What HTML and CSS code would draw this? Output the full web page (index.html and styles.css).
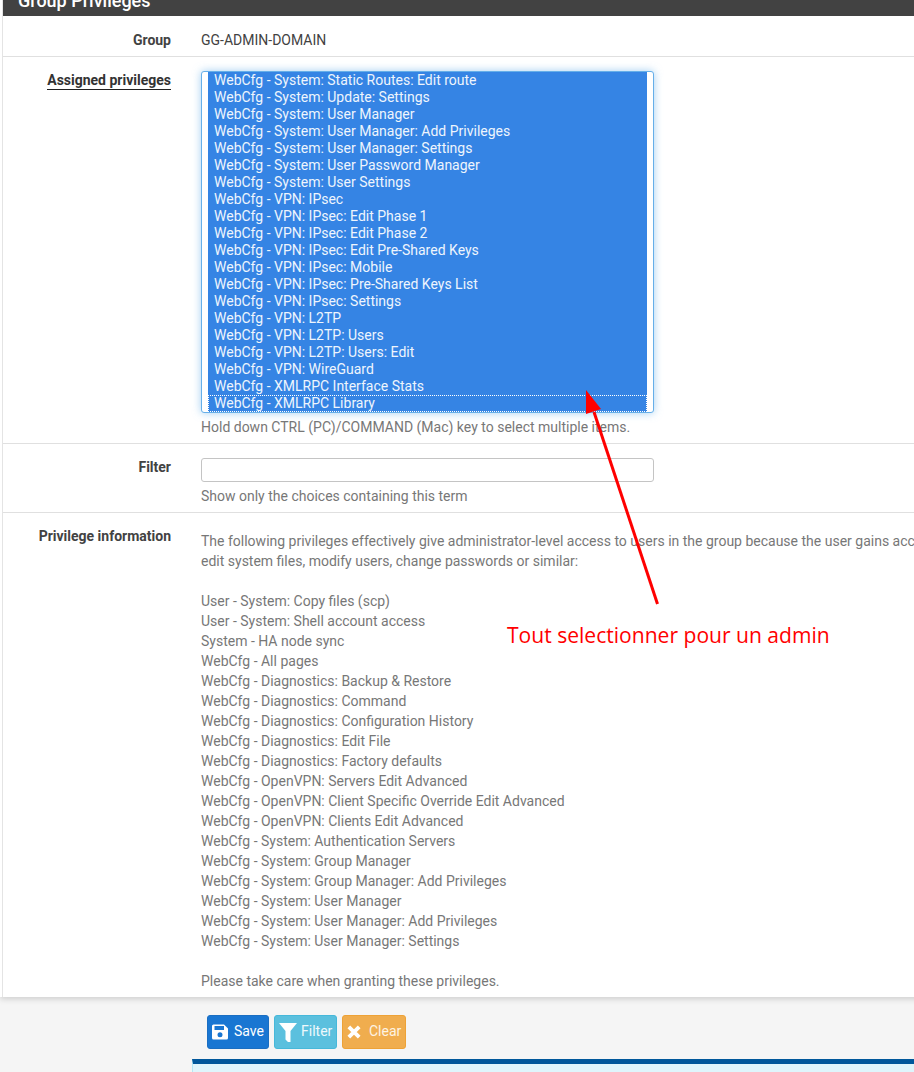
FILE: index.html
```html
<!DOCTYPE html>
<html lang="en">
<head>
<meta charset="utf-8">
<title>Group Privileges</title>
<link rel="stylesheet" href="styles.css">
</head>
<body>
<div class="page">
  <div class="panel">
  <section class="panel-inner">
    <h2 class="panel-title">Group Privileges</h2>
    <div class="row row-group">
      <div class="label">Group</div>
      <div class="content value">GG-ADMIN-DOMAIN</div>
    </div>
    <div class="row row-assigned">
      <div class="label"><span class="underlined">Assigned privileges</span></div>
      <div class="content">
        <div class="listbox">
          <div class="option">WebCfg - System: Static Routes: Edit route</div>
          <div class="option">WebCfg - System: Update: Settings</div>
          <div class="option">WebCfg - System: User Manager</div>
          <div class="option">WebCfg - System: User Manager: Add Privileges</div>
          <div class="option">WebCfg - System: User Manager: Settings</div>
          <div class="option">WebCfg - System: User Password Manager</div>
          <div class="option">WebCfg - System: User Settings</div>
          <div class="option">WebCfg - VPN: IPsec</div>
          <div class="option">WebCfg - VPN: IPsec: Edit Phase 1</div>
          <div class="option">WebCfg - VPN: IPsec: Edit Phase 2</div>
          <div class="option">WebCfg - VPN: IPsec: Edit Pre-Shared Keys</div>
          <div class="option">WebCfg - VPN: IPsec: Mobile</div>
          <div class="option">WebCfg - VPN: IPsec: Pre-Shared Keys List</div>
          <div class="option">WebCfg - VPN: IPsec: Settings</div>
          <div class="option">WebCfg - VPN: L2TP</div>
          <div class="option">WebCfg - VPN: L2TP: Users</div>
          <div class="option">WebCfg - VPN: L2TP: Users: Edit</div>
          <div class="option">WebCfg - VPN: WireGuard</div>
          <div class="option">WebCfg - XMLRPC Interface Stats</div>
          <div class="option option-active">WebCfg - XMLRPC Library</div>
        </div>
        <p class="help">Hold down CTRL (PC)/COMMAND (Mac) key to select multiple items.</p>
      </div>
    </div>
    <div class="row row-filter">
      <div class="label">Filter</div>
      <div class="content">
        <div class="textbox"></div>
        <p class="help">Show only the choices containing this term</p>
      </div>
    </div>
    <div class="row row-info">
      <div class="label label-info">Privilege information</div>
      <div class="content info">
        <p>The following privileges effectively give administrator-level access to users in the group because the user gains access to execute general commands,<br>edit system files, modify users, change passwords or similar:</p>
        <ul class="plain">
          <li>User - System: Copy files (scp)</li>
          <li>User - System: Shell account access</li>
          <li>System - HA node sync</li>
          <li>WebCfg - All pages</li>
          <li>WebCfg - Diagnostics: Backup &amp; Restore</li>
          <li>WebCfg - Diagnostics: Command</li>
          <li>WebCfg - Diagnostics: Configuration History</li>
          <li>WebCfg - Diagnostics: Edit File</li>
          <li>WebCfg - Diagnostics: Factory defaults</li>
          <li>WebCfg - OpenVPN: Servers Edit Advanced</li>
          <li>WebCfg - OpenVPN: Client Specific Override Edit Advanced</li>
          <li>WebCfg - OpenVPN: Clients Edit Advanced</li>
          <li>WebCfg - System: Authentication Servers</li>
          <li>WebCfg - System: Group Manager</li>
          <li>WebCfg - System: Group Manager: Add Privileges</li>
          <li>WebCfg - System: User Manager</li>
          <li>WebCfg - System: User Manager: Add Privileges</li>
          <li>WebCfg - System: User Manager: Settings</li>
        </ul>
        <p>Please take care when granting these privileges.</p>
      </div>
    </div>
  </section>
  </div>

  <div class="actions">
    <button class="btn btn-save" type="button">
      <svg class="icon icon-save" viewBox="0 0 16 16"><path fill="#fff" fill-rule="evenodd" d="M1.500 .5H12L16 4.500V14A1.500 1.500 0 0 1 14.500 15.500H1.500A1.500 1.500 0 0 1 0 14V2A1.500 1.500 0 0 1 1.500 .5zM2.500 2V6H12V2zM8 8.200a2.500 2.500 0 1 0 0 5a2.500 2.500 0 0 0 0-5z"/></svg>
      <span>Save</span>
    </button>
    <button class="btn btn-filter" type="button">
      <svg class="icon icon-filter" viewBox="0 0 18 19"><path fill="#fff" d="M0 0H18L11.500 8V19H9L6.500 16.500V8z"/></svg>
      <span>Filter</span>
    </button>
    <button class="btn btn-clear" type="button">
      <svg class="icon icon-clear" viewBox="0 0 14 14"><path fill="none" stroke="#fff" stroke-width="3.800" d="M1.800 1.800L12.200 12.200M12.200 1.800L1.800 12.200"/></svg>
      <span>Clear</span>
    </button>
  </div>
  <div class="infobox"></div>
</div>

<svg class="arrow" viewBox="0 0 914 1072" aria-hidden="true">
  <line x1="657.500" y1="604" x2="594" y2="412" stroke="#ff0000" stroke-width="3"/>
  <polygon fill="#ff0000" points="586,390 586,414 601,409"/>
</svg>
<div class="annotation">Tout selectionner pour un admin</div>
</body>
</html>
```
FILE: styles.css
```css
* { box-sizing: border-box; }

html, body {
  margin: 0;
  height: 1072px;
  overflow: hidden;
}

body {
  position: relative;
  background: #f5f5f5;
  font-family: Roboto, "Liberation Sans", sans-serif;
  font-size: 14px;
  color: #424242;
}

.page {
  width: 1200px;
}

.panel {
  padding-left: 2px;
  background: #fff;
  box-shadow: 0 2px 6px rgba(0, 0, 0, 0.16);
}

.panel-inner {
  border-left: 1px solid #e4e4e4;
}

.panel-title {
  margin: 0;
  height: 16px;
  padding: 0 0 5px 15px;
  background: #424242;
  color: #fff;
  font-size: 18px;
  font-weight: 500;
  line-height: 20px;
  overflow: hidden;
  display: flex;
  align-items: flex-end;
}

.row {
  display: grid;
  grid-template-columns: 168px 1fr;
  column-gap: 30px;
  border-bottom: 1px solid #e0e0e0;
}

.row-group { height: 41px; padding-top: 14px; }
.row-assigned { height: 387px; padding-top: 14px; }
.row-filter { height: 69px; padding-top: 14px; }
.row-info { height: 484px; padding-top: 13px; border-bottom: 0; }

.label {
  text-align: right;
  font-weight: 700;
  line-height: 20px;
  color: #424242;
  margin-top: -1px;
}

.row-group .label,
.label-info { margin-top: 0; }

.underlined {
  color: #333;
  border-bottom: 1px solid #212121;
  padding-bottom: 1px;
}

.value { line-height: 20px; }

.listbox {
  width: 453px;
  height: 342px;
  padding: 0 6px;
  background: #fff;
  border: 1px solid #66afe9;
  border-radius: 3px;
  box-shadow: 0 0 8px rgba(102, 175, 233, 0.6);
  overflow: hidden;
}

.option {
  height: 17px;
  padding-left: 6px;
  background: #3584e4;
  color: #eef5fd;
  line-height: 17px;
  white-space: nowrap;
}

.option-active {
  outline: 1px dotted #fff;
  outline-offset: -1px;
}

.help {
  margin: 4px 0 0;
  color: #777;
  line-height: 20px;
}

.textbox {
  width: 453px;
  height: 24px;
  background: #fff;
  border: 1px solid #c4c4c4;
  border-radius: 3px;
}

.info {
  padding-top: 5px;
  color: #777;
  line-height: 20px;
  white-space: nowrap;
}

.info p { margin: 0; }

.plain {
  list-style: none;
  margin: 20px 0;
  padding: 0;
}

.actions {
  display: flex;
  gap: 5px;
  margin: 18px 0 0 207px;
}

.btn {
  display: flex;
  align-items: center;
  height: 34px;
  padding: 0 0 2px 4px;
  border: 1px solid;
  border-radius: 3px;
  color: #fff;
  font: 14px/20px Roboto, "Liberation Sans", sans-serif;
}

.btn-save { width: 62px; background: #1976d2; border-color: #1a6ec2; }
.btn-filter { width: 63px; background: #5bc0de; border-color: #46b8da; color: #eef9fc; }
.btn-clear { width: 64px; background: #f0ad4e; border-color: #eea236; color: #fdf3e3; }

.icon { flex: none; display: block; }
.icon-save { width: 16px; height: 16px; margin: 1px 6px 0 0; }
.icon-filter { width: 18px; height: 19px; margin: 2px 4px 0 0; }
.icon-clear { width: 14px; height: 14px; margin: 2px 8px 0 0; }

.infobox {
  height: 60px;
  margin: 10px 0 0 192px;
  background: #dff5fc;
  border-top: 5px solid #00579b;
  border-left: 1px solid #b5e8f5;
}

.arrow {
  position: absolute;
  left: 0;
  top: 0;
  width: 914px;
  height: 1072px;
  pointer-events: none;
}

.annotation {
  position: absolute;
  left: 507px;
  top: 620px;
  color: #f00;
  font-family: "Open Sans", sans-serif;
  font-size: 21.07px;
  line-height: 30px;
  white-space: nowrap;
}
```
